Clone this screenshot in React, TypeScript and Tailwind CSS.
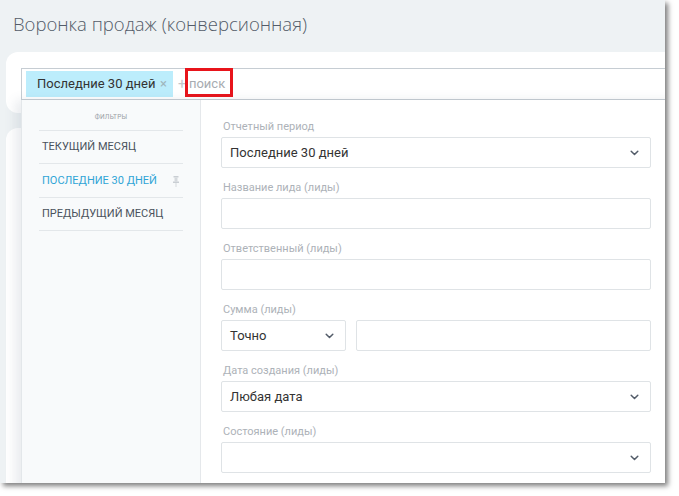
import React from "react";

const font = { fontFamily: 'Roboto, "Noto Sans", sans-serif' };
const titleFont = { fontFamily: '"Open Sans", "Noto Sans", sans-serif' };

function Chevron() {
  return (
    <svg width="9" height="6" viewBox="0 0 9 6" className="shrink-0">
      <path d="M1.2 1.2 L4.5 4.5 L7.8 1.2" fill="none" stroke="#535c69" strokeWidth="1.5" strokeLinecap="round" strokeLinejoin="round" />
    </svg>
  );
}

function Label({ children }: { children: React.ReactNode }) {
  return <div className="h-[14px] mb-[3px] text-[11px] leading-[14px] text-[#adb2b8] pl-[2px] whitespace-nowrap">{children}</div>;
}

function Box({ children, chevron, className = "" }: { children?: React.ReactNode; chevron?: boolean; className?: string }) {
  return (
    <div className={"h-[31px] border border-[#dfe3e6] rounded-[2px] bg-white flex items-center pl-[8px] pr-[11px] text-[13px] text-[#333] " + className}>
      <span className="flex-1 whitespace-nowrap">{children}</span>
      {chevron && <Chevron />}
    </div>
  );
}

export default function App() {
  return (
    <div className="w-[679px] h-[496px] bg-white" style={font}>
      <div className="relative w-[665px] h-[483px] bg-[#eef2f4] overflow-hidden shadow-[3px_3px_5px_rgba(0,0,0,0.5)]">
        <div className="h-[52px] pl-[13px] pt-[11px] text-[18.5px] leading-[26px] text-[#535c69] font-light whitespace-nowrap" style={titleFont}>
          Воронка продаж (конверсионная)
        </div>
        <div className="ml-[6px] h-[61px] bg-white rounded-l-[12px] pt-[16px] pl-[15px]">
          <div className="w-[700px] h-[32px] border border-[#c6cdd3] flex items-center pl-[4px]">
            <div className="h-[26px] w-[147px] bg-[#bcedfc] flex items-center justify-between pl-[11px] pr-[6px] text-[13px] text-[#333]">
              <span className="whitespace-nowrap">Последние 30 дней</span>
              <span className="text-[13px] text-[#9fb6bd]">×</span>
            </div>
            <span className="ml-[5px] text-[14px] text-[#c3c6ca]">+</span>
            <span className="ml-[3px] text-[13px] text-[#a7acb1]">поиск</span>
          </div>
        </div>
        <div className="mt-[15px] ml-[6px] h-[400px] bg-white rounded-tl-[12px]" />

        {/* red highlight annotation */}
        <div className="absolute left-[185px] top-[68px] w-[48px] h-[29px] border-[3px] border-[#e8141b]" />

        {/* dropdown popup */}
        <div className="absolute left-[21px] top-[100px] w-[660px] h-[400px] flex bg-white border-l border-[#e3e7ea] shadow-[-6px_0_10px_rgba(80,100,120,0.12)]">
          <div className="w-[179px] bg-[#f8fafb] border-r border-[#e5e8eb] px-[17px]">
            <div className="h-[31px] flex items-center justify-center text-[6.5px] text-[#9aa0a6] tracking-[0.2px] pt-[6px] border-b border-[#e3e7ea]">
              ФИЛЬТРЫ
            </div>
            <div className="h-[33px] flex items-center pl-[3px] pt-[1px] text-[11px] text-[#4a525c] border-b border-[#e3e7ea]">
              ТЕКУЩИЙ МЕСЯЦ
            </div>
            <div className="h-[34px] flex items-center pl-[3px] pr-[4px] pt-[1px] text-[11px] text-[#2fa4d6] border-b border-[#e3e7ea]">
              <span className="flex-1">ПОСЛЕДНИЕ 30 ДНЕЙ</span>
              <svg width="6" height="11" viewBox="0 0 6 11">
                <rect x="0.5" y="0" width="5" height="1.5" fill="#c9ced3" />
                <rect x="1.5" y="1.5" width="3" height="4" fill="#d5d9dd" />
                <rect x="0" y="5.5" width="6" height="1.5" fill="#c9ced3" />
                <rect x="2.5" y="7" width="1" height="4" fill="#d5d9dd" />
              </svg>
            </div>
            <div className="h-[33px] flex items-center pl-[3px] pt-[1px] text-[11px] text-[#4a525c] border-b border-[#e3e7ea]">
              ПРЕДЫДУЩИЙ МЕСЯЦ
            </div>
          </div>
          <div className="pl-[20px] pt-[20px] w-[451px]">
            <div className="w-[430px] flex flex-col">
              <Label>Отчетный период</Label>
              <Box chevron>Последние 30 дней</Box>
              <div className="h-[13px]" />
              <Label>Название лида (лиды)</Label>
              <Box />
              <div className="h-[13px]" />
              <Label>Ответственный (лиды)</Label>
              <Box />
              <div className="h-[13px]" />
              <Label>Сумма (лиды)</Label>
              <div className="flex gap-[10px]">
                <Box chevron className="w-[125px]">Точно</Box>
                <Box className="flex-1" />
              </div>
              <div className="h-[13px]" />
              <Label>Дата создания (лиды)</Label>
              <Box chevron>Любая дата</Box>
              <div className="h-[13px]" />
              <Label>Состояние (лиды)</Label>
              <Box chevron />
            </div>
          </div>
        </div>
      </div>
    </div>
  );
}
